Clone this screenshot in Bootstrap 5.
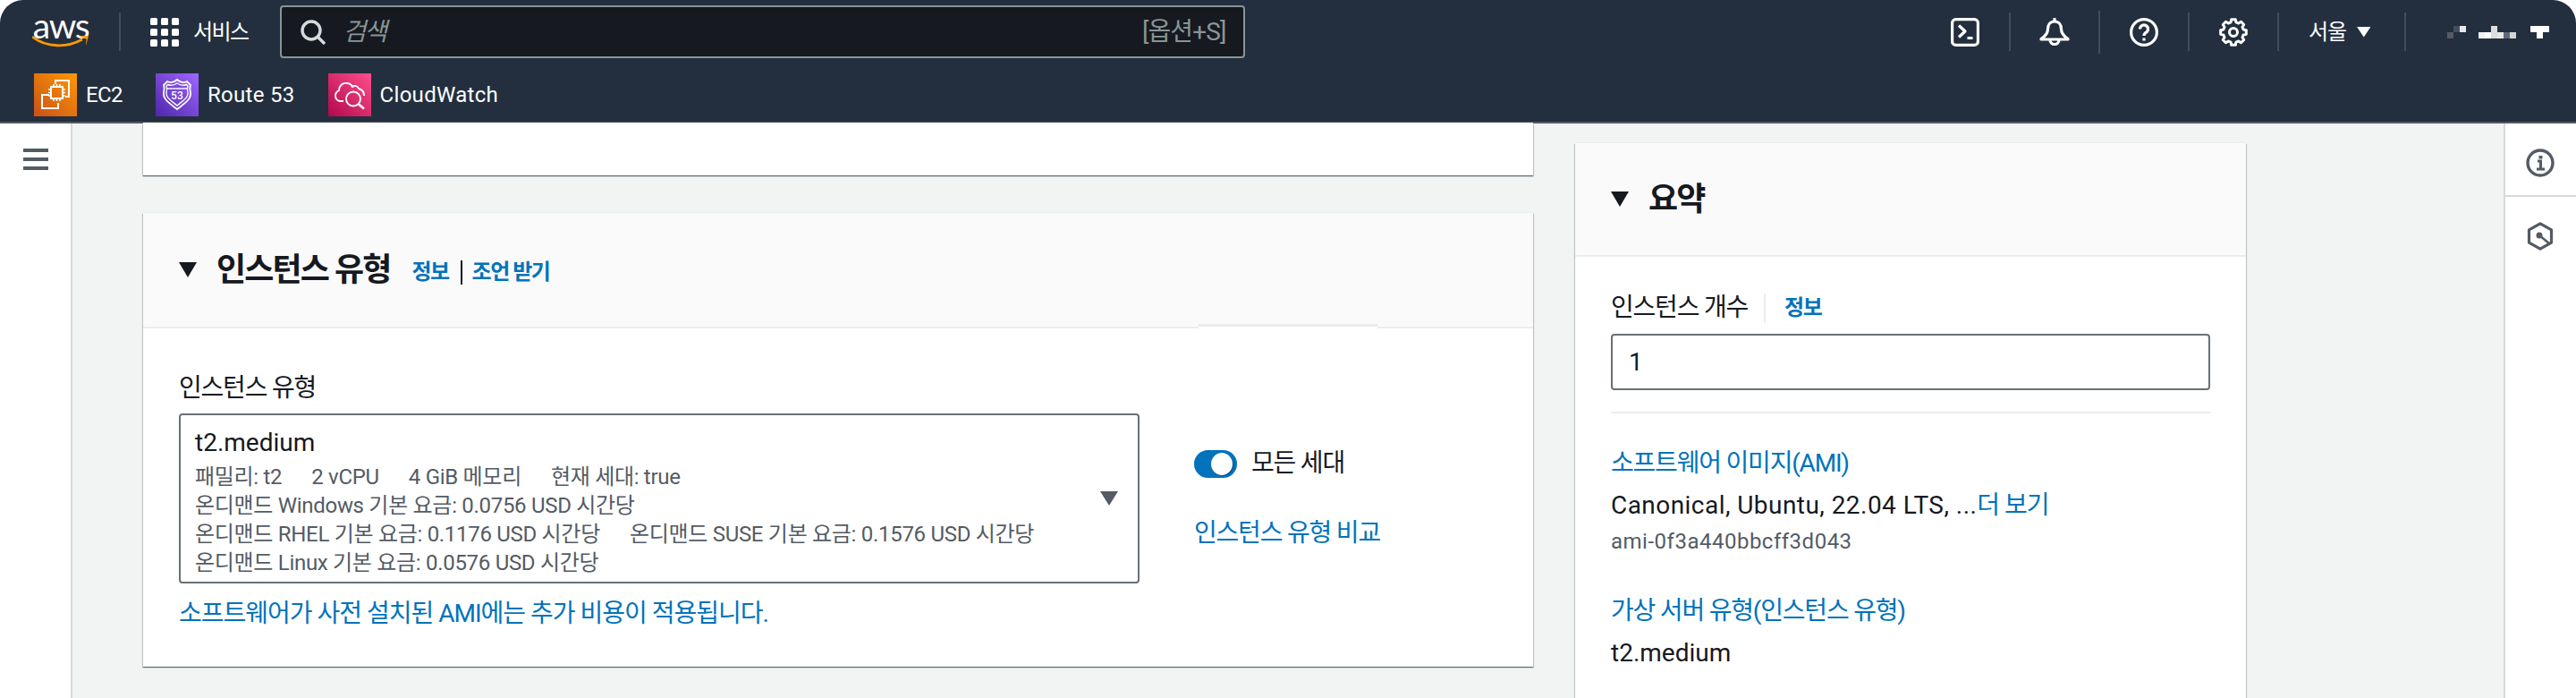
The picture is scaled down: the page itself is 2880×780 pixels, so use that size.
<!DOCTYPE html>
<html lang="ko">
<head>
<meta charset="UTF-8">
<title>EC2 인스턴스 시작</title>
<link href="https://cdn.jsdelivr.net/npm/bootstrap@5.3.0/dist/css/bootstrap.min.css" rel="stylesheet">
<style>
  :root { --ink: #16191f; --soft: #545b64; --blue: #0073bb; --rule: #eaeded; }
  html, body { height: 780px; overflow: hidden; }
  body { font-family: Roboto, "Noto Sans CJK KR", sans-serif; background: #fff; color: var(--ink); font-size: 28px; line-height: 36px; }
  a { color: var(--blue); text-decoration: none; }
  .aws-top { background: #232f3e; height: 138px; border-bottom: 2px solid #545b64; border-radius: 26px 26px 0 0; color: #fff; }
  .top-row { height: 71px; padding: 0 29px 0 36px; }
  .logo-box { width: 64px; }
  .aws-word { font: 400 39px/24px Lato, sans-serif; letter-spacing: -1.4px; color: #fff; height: 22px; }
  .logo-smile { display: block; margin-top: 1px; }
  .top-sep { width: 2px; height: 43px; background: #414d5c; flex: none; }
  .logo-sep { margin-left: 33px; }
  .sep-tall { height: 48px; }
  .svc-btn { font-size: 24px; letter-spacing: -1.6px; margin-left: 33px; }
  .search-box { width: 1079px; height: 59px; background: #16191f; border: 2px solid #879596; border-radius: 4px; color: #879596; padding: 0 20px 0 21px; margin-left: 36px; gap: 19px; }
  .search-box em { font-size: 28px; letter-spacing: -2px; }
  .search-key { margin-left: auto; font-size: 28px; letter-spacing: -.9px; }
  .top-tools { margin-left: auto; }
  .tool-cell { width: 98px; }
  .region-cell { width: 140px; padding-left: 33px; font-size: 24px; letter-spacing: -1.2px; }
  .region-tri { width: 16px; height: 12px; background: #fff; clip-path: polygon(0 0, 100% 0, 50% 100%); margin-left: 12px; }
  .acct-pix { margin-left: 46px; display: block; }
  .shot-row { padding: 5px 0 0 38px; height: 65px; font-size: 24px; line-height: 30px; letter-spacing: .3px; }
  .shot-item { margin-right: 37px; gap: 10px; }
  .shot-tight { letter-spacing: -.6px; }
  .svc-tile { width: 48px; height: 48px; flex: none; display: block; }
  .tile-ec2 { background: linear-gradient(45deg, #c8511b, #ff9900); }
  .tile-r53 { background: linear-gradient(45deg, #4d27aa, #a166ff); }
  .tile-cw { background: linear-gradient(45deg, #b0084d, #ff4f8b); }
  .page-body { height: 642px; }
  .side-left { width: 81px; border-right: 2px solid #d5dbdb; background: #fff; flex: none; }
  .burger { width: 28px; height: 24px; margin: 28px 0 0 26px; border-top: 4px solid #545b64; border-bottom: 4px solid #545b64; position: relative; }
  .burger::after { content: ""; position: absolute; left: 0; right: 0; top: 6px; height: 4px; background: #545b64; }
  .work-area { background: #f2f3f3; padding-left: 79px; gap: 47px; }
  .col-main { width: 1554px; flex: none; }
  .col-sum { width: 750px; flex: none; margin-top: 22px; }
  .aws-panel { background: #fff; box-shadow: 0 1px 1px 0 rgba(0,28,36,.5), 1px 1px 1px 0 rgba(0,28,36,.15), -1px 1px 1px 0 rgba(0,28,36,.15), 0 -1px 0 var(--rule); }
  .panel-stub { height: 58px; margin-bottom: 42px; }
  .panel-head { background: #fafafa; border-bottom: 2px solid var(--rule); position: relative; }
  .head-main { height: 129px; padding: 0 40px; }
  .head-sum { height: 127px; padding: 0 40px; }
  .head-notch { position: absolute; left: 1180px; bottom: -2px; width: 200px; height: 5px; background: #fff; border-top: 3px solid var(--rule); }
  .tri { width: 20px; height: 17px; background: var(--ink); clip-path: polygon(0 0, 100% 0, 50% 100%); flex: none; margin-right: 22px; }
  .panel-title { font-size: 36px; font-weight: 700; line-height: 44px; letter-spacing: -1.9px; margin: 0; }
  .info-link { font-size: 24px; font-weight: 700; letter-spacing: -1.5px; }
  .head-links { margin-left: 24px; padding-top: 4px; }
  .head-bar { width: 2px; height: 27px; background: var(--ink); margin: 2px 11px 0 13px; }
  .type-body { height: 378px; padding: 49px 40px 0; }
  .fld-label { font-size: 28px; line-height: 36px; letter-spacing: -1.2px; }
  .type-select { width: 1074px; height: 190px; border: 2px solid #687078; border-radius: 4px; padding: 13px 16px 0; margin-top: 10px; position: relative; }
  .type-select .big { font-size: 28px; line-height: 36px; margin-bottom: 4px; }
  .type-meta { font-size: 24px; line-height: 32px; color: var(--soft); letter-spacing: -.3px; white-space: nowrap; }
  .type-meta .gap-it { margin-left: 33px; }
  .sel-caret { position: absolute; right: 22px; top: 85px; width: 20px; height: 16px; background: #545b64; clip-path: polygon(0 0, 100% 0, 50% 100%); }
  .hint-link { display: block; margin-top: 16px; letter-spacing: -1px; }
  .type-side { margin-left: 61px; padding-top: 84px; }
  .aws-toggle { width: 48px; height: 31px; background: var(--blue); border-radius: 16px; position: relative; flex: none; }
  .aws-toggle::after { content: ""; position: absolute; right: 5px; top: 3px; width: 24px; height: 25px; background: #fff; border-radius: 50%; box-shadow: 1px 1px 0 #00528a; }
  .side-compare { margin-top: 42px; }
  .sum-body { padding: 39px 40px 0; }
  .count-bar { width: 2px; height: 33px; background: var(--rule); margin: 0 21px 0 18px; }
  .count-box { height: 63px; border: 2px solid #687078; border-radius: 4px; padding: 0 18px; margin-top: 11px; }
  .sum-rule { height: 2px; background: var(--rule); margin: 24px 0 38px; }
  .sum-wide { letter-spacing: .45px; margin-top: 11px; }
  .sum-wide a { letter-spacing: -1px; }
  .sum-ami { margin-top: 6px; letter-spacing: .5px; }
  .sum-type { margin-top: 44px; }
  .sum-val { margin-top: 11px; }
  .rail-right { width: 81px; border-left: 2px solid #d5dbdb; background: #fff; flex: none; margin-left: auto; }
  .rail-cell { height: 80px; padding-left: 23px; padding-top: 24px; }
  .rail-line { height: 2px; background: #d5dbdb; }
</style>
</head>
<body>
  <header class="aws-top">
    <div class="top-row d-flex align-items-center">
      <div class="logo-box d-flex flex-column align-items-center">
        <div class="aws-word">aws</div>
        <svg class="logo-smile" width="64" height="16" viewBox="0 0 64 16"><path d="M0 2c16 12 38 13 56 3" fill="none" stroke="#f90" stroke-width="2.8"/><path d="M52 1.500l11-.5-3 11c0-3 .5-6 .5-7.500z" fill="#f90"/></svg>
      </div>
      <div class="top-sep logo-sep"></div>
      <div class="svc-btn d-flex align-items-center gap-3">
        <svg width="32" height="32" viewBox="0 0 32 32" fill="#fff"><rect width="8" height="8" rx="1.5"/><rect x="12" width="8" height="8" rx="1.5"/><rect x="24" width="8" height="8" rx="1.5"/><rect y="12" width="8" height="8" rx="1.5"/><rect x="12" y="12" width="8" height="8" rx="1.5"/><rect x="24" y="12" width="8" height="8" rx="1.5"/><rect y="24" width="8" height="8" rx="1.5"/><rect x="12" y="24" width="8" height="8" rx="1.5"/><rect x="24" y="24" width="8" height="8" rx="1.5"/></svg>
        <span>서비스</span>
      </div>
      <div class="search-box d-flex align-items-center">
        <svg width="28" height="28" viewBox="0 0 28 28" fill="none" stroke="#d5dbdb" stroke-width="3.4"><circle cx="12" cy="12" r="10"/><path d="M19 19l8 8"/></svg>
        <em>검색</em>
        <span class="search-key">[옵션+S]</span>
      </div>
      <div class="top-tools d-flex align-items-center">
        <div class="tool-cell d-flex justify-content-center">
          <svg width="32" height="32" viewBox="0 0 32 32" fill="none" stroke="#fff" stroke-width="3.2" stroke-linejoin="round"><rect x="1.600" y="1.600" width="28.800" height="28.800" rx="4"/><path d="M9 8.500l7 6.500-7 6.500M18.500 22.500h6"/></svg>
        </div>
        <div class="top-sep"></div>
        <div class="tool-cell d-flex justify-content-center">
          <svg width="34" height="32" viewBox="0 0 34 32" fill="none" stroke="#fff" stroke-width="3.2" stroke-linejoin="round"><path d="M17 0v4M17 4c-5 0-7.500 4-7.500 8.500 0 5-3 8-7.500 11v.5h30v-.5c-4.500-3-7.500-6-7.500-11C24.500 8 22 4 17 4z"/><path d="M12 24.500a5 5 0 0 0 10 0"/></svg>
        </div>
        <div class="top-sep sep-tall"></div>
        <div class="tool-cell d-flex justify-content-center">
          <svg width="32" height="32" viewBox="0 0 32 32" fill="none" stroke="#fff" stroke-width="3.2"><circle cx="16" cy="16" r="14.400"/><path d="M11.500 12.500a4.500 4.500 0 1 1 7 3.700c-1.600 1-2.500 2-2.500 3.800"/><path d="M16 22.500v3"/></svg>
        </div>
        <div class="top-sep"></div>
        <div class="tool-cell d-flex justify-content-center">
          <svg width="32" height="32" viewBox="0 0 32 32" fill="none" stroke="#fff" stroke-width="3" stroke-linejoin="round"><polygon points="13.730,1.680 18.270,1.680 18.980,4.890 21.750,6.040 24.520,4.270 27.730,7.480 25.960,10.250 27.110,13.020 30.320,13.730 30.320,18.270 27.110,18.980 25.960,21.750 27.730,24.520 24.520,27.730 21.750,25.960 18.980,27.110 18.270,30.320 13.730,30.320 13.020,27.110 10.250,25.960 7.480,27.730 4.270,24.520 6.040,21.750 4.890,18.980 1.680,18.270 1.680,13.730 4.890,13.020 6.040,10.250 4.270,7.480 7.480,4.270 10.250,6.040 13.020,4.890"/><circle cx="16" cy="16" r="4.500"/></svg>
        </div>
        <div class="top-sep"></div>
        <div class="region-cell d-flex align-items-center"><span>서울</span><span class="region-tri"></span></div>
        <div class="top-sep"></div>
        <svg class="acct-pix" width="115" height="14" viewBox="0 0 115 14" shape-rendering="crispEdges">
          <rect x="0" y="7" width="7" height="7" fill="#545b64"/><rect x="7" y="0" width="7" height="7" fill="#414f5f"/><rect x="14" y="0" width="7" height="7" fill="#e8e8e8"/>
          <rect x="35" y="7" width="7" height="7" fill="#f0f0f0"/><rect x="42" y="7" width="7" height="7" fill="#fff"/><rect x="49" y="7" width="7" height="7" fill="#ddd"/><rect x="49" y="0" width="7" height="7" fill="#ddd"/><rect x="56" y="7" width="7" height="7" fill="#e8e8e8"/><rect x="63" y="7" width="7" height="7" fill="#5f6b7a"/><rect x="70" y="7" width="7" height="7" fill="#d5d5d5"/>
          <rect x="93" y="0" width="21" height="7" fill="#fff"/><rect x="100" y="7" width="7" height="7" fill="#fff"/>
        </svg>
      </div>
    </div>
    <div class="shot-row d-flex align-items-center">
      <div class="shot-item d-flex align-items-center">
        <svg class="svc-tile tile-ec2" viewBox="0 0 48 48" fill="none" stroke="#fff" stroke-width="2"><path d="M24 12V8h15v18h-4M17 24H9v15h18v-6"/><rect x="19" y="15" width="13" height="13"/><path d="M22 12v3M25.500 12v3M29 12v3M22 28v3M25.500 28v3M29 28v3M16 18h3M16 21.500h3M16 25h3M32 18h3M32 21.500h3M32 25h3" stroke-width="1.600"/></svg>
        <span class="shot-tight">EC2</span>
      </div>
      <div class="shot-item d-flex align-items-center">
        <svg class="svc-tile tile-r53" viewBox="0 0 48 48" fill="none" stroke="#fff" stroke-width="1.800"><path d="M24 7C27 10 31 11 35 9L39 13C38 16 38 18 39 21C40 29 33 33 24 40C15 33 8 29 9 21C10 18 10 16 9 13L13 9C17 11 21 10 24 7Z"/><path d="M24 11C27 13 31 14 34.500 12.500L36 14C35 17 35 18 36 21C37 27 31 30 24 36C17 30 11 27 12 21C13 18 13 17 12 14L13.500 12.500C17 14 21 13 24 11Z" stroke-width="1.400"/><path d="M13 17h22" stroke-width="1.400"/><text x="24" y="29" text-anchor="middle" fill="#fff" stroke="none" font-family="Roboto, sans-serif" font-size="12" font-weight="500">53</text></svg>
        <span>Route 53</span>
      </div>
      <div class="shot-item d-flex align-items-center">
        <svg class="svc-tile tile-cw" viewBox="0 0 48 48" fill="none" stroke="#fff" stroke-width="1.900"><path d="M17 31H14C10 31 8 28 8 25C8 22 10 20 12 19C12 14 16 10 21 11C24 11 26 13 27 15C29 13 33 14 34 17C38 18 40 21 40 25"/><circle cx="28" cy="28.500" r="8"/><path d="M34 34.500l6 5" stroke-width="2.600"/></svg>
        <span>CloudWatch</span>
      </div>
    </div>
  </header>
  <div class="page-body d-flex">
    <aside class="side-left"><div class="burger"></div></aside>
    <main class="work-area d-flex flex-grow-1">
      <div class="col-main">
        <section class="aws-panel panel-stub"></section>
        <section class="aws-panel">
          <div class="panel-head head-main d-flex align-items-center">
            <span class="tri"></span>
            <h2 class="panel-title">인스턴스 유형</h2>
            <div class="head-links d-flex align-items-center">
              <a class="info-link" href="#">정보</a><span class="head-bar"></span><a class="info-link" href="#">조언 받기</a>
            </div>
            <span class="head-notch"></span>
          </div>
          <div class="type-body d-flex">
            <div>
              <div class="fld-label">인스턴스 유형</div>
              <div class="type-select">
                <div class="big">t2.medium</div>
                <div class="type-meta">패밀리: t2<span class="gap-it">2 vCPU</span><span class="gap-it">4 GiB 메모리</span><span class="gap-it">현재 세대: true</span></div>
                <div class="type-meta">온디맨드 Windows 기본 요금: 0.0756 USD 시간당</div>
                <div class="type-meta">온디맨드 RHEL 기본 요금: 0.1176 USD 시간당<span class="gap-it">온디맨드 SUSE 기본 요금: 0.1576 USD 시간당</span></div>
                <div class="type-meta">온디맨드 Linux 기본 요금: 0.0576 USD 시간당</div>
                <span class="sel-caret"></span>
              </div>
              <a class="hint-link" href="#">소프트웨어가 사전 설치된 AMI에는 추가 비용이 적용됩니다.</a>
            </div>
            <div class="type-side">
              <div class="d-flex align-items-center gap-3"><span class="aws-toggle"></span><span class="fld-label">모든 세대</span></div>
              <a class="fld-label d-block side-compare" href="#">인스턴스 유형 비교</a>
            </div>
          </div>
        </section>
      </div>
      <div class="col-sum">
        <section class="aws-panel h-100">
          <div class="panel-head head-sum d-flex align-items-center">
            <span class="tri"></span>
            <h2 class="panel-title">요약</h2>
          </div>
          <div class="sum-body">
            <div class="d-flex align-items-center"><span class="fld-label">인스턴스 개수</span><span class="count-bar"></span><a class="info-link" href="#">정보</a></div>
            <div class="count-box d-flex align-items-center">1</div>
            <div class="sum-rule"></div>
            <a class="fld-label d-block" href="#">소프트웨어 이미지(AMI)</a>
            <div class="sum-wide">Canonical, Ubuntu, 22.04 LTS, ...<a href="#">더 보기</a></div>
            <div class="type-meta sum-ami">ami-0f3a440bbcff3d043</div>
            <a class="fld-label d-block sum-type" href="#">가상 서버 유형(인스턴스 유형)</a>
            <div class="sum-val">t2.medium</div>
          </div>
        </section>
      </div>
      <aside class="rail-right">
        <div class="rail-cell">
          <svg width="32" height="32" viewBox="0 0 32 32" fill="none" stroke="#545b64" stroke-width="3.400"><circle cx="16" cy="16" r="14"/><path d="M13 14h3.500v8M12 23h9" stroke-width="3"/><path d="M14.500 8h4v3.500h-4z" fill="#545b64" stroke="none"/></svg>
        </div>
        <div class="rail-line"></div>
        <div class="rail-cell">
          <svg width="32" height="32" viewBox="0 0 32 32" fill="none" stroke="#545b64" stroke-width="3.200" stroke-linejoin="round"><path d="M16 1.800l12.500 7.100v14.200L16 30.200 3.500 23.100V8.900z"/><circle cx="15" cy="15" r="3.500" fill="#545b64" stroke="none"/><path d="M15 15l11 9" stroke-width="2.600"/></svg>
        </div>
      </aside>
    </main>
  </div>
  <script src="https://cdn.jsdelivr.net/npm/bootstrap@5.3.0/dist/js/bootstrap.bundle.min.js"></script>
</body>
</html>
